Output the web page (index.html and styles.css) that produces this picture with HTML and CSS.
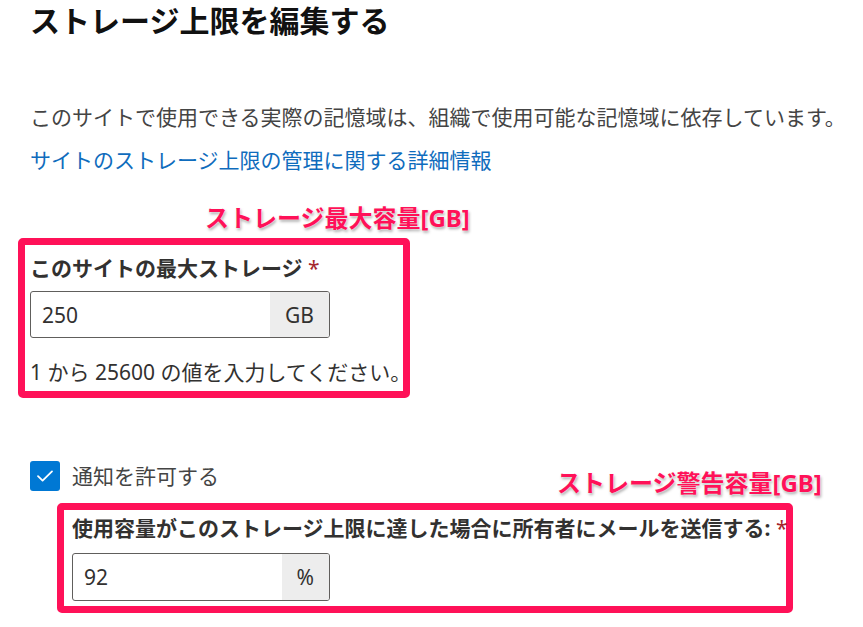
FILE: index.html
```html
<!DOCTYPE html>
<html lang="ja">
<head>
<meta charset="utf-8">
<title>ストレージ上限を編集する</title>
<link rel="stylesheet" href="styles.css">
</head>
<body>
<main class="panel">
  <h1 class="title">ストレージ上限を編集する</h1>
  <p class="desc">このサイトで使用できる実際の記憶域は、組織で使用可能な記憶域に依存しています。</p>
  <a class="link" href="#">サイトのストレージ上限の管理に関する詳細情報</a>

  <section class="mark mark-max">
    <span class="note note-max">ストレージ最大容量[GB]</span>
    <label class="field-label">このサイトの最大ストレージ <span class="req">*</span></label>
    <div class="input input-max">
      <span class="value">250</span>
      <span class="suffix">GB</span>
    </div>
    <p class="help">1 から 25600 の値を入力してください。</p>
  </section>

  <div class="check-row">
    <span class="checkbox">
      <svg width="18" height="14" viewBox="0 0 18 14"><path d="M2 7.2 L6.6 11.6 L16 2.4" fill="none" stroke="#fff" stroke-width="1.8" stroke-linecap="round" stroke-linejoin="round"/></svg>
    </span>
    <span class="check-label">通知を許可する</span>
  </div>

  <section class="mark mark-warn">
    <span class="note note-warn">ストレージ警告容量[GB]</span>
    <label class="field-label">使用容量がこのストレージ上限に達した場合に所有者にメールを送信する: <span class="req">*</span></label>
    <div class="input input-warn">
      <span class="value">92</span>
      <span class="suffix">%</span>
    </div>
  </section>
</main>
</body>
</html>
```

FILE: styles.css
```css
* { box-sizing: border-box; }
html, body { margin: 0; padding: 0; background: #fff; }
body {
  font-family: "Noto Sans", "Noto Sans CJK JP", sans-serif;
  color: #323130;
  font-size: 21px;
}
.panel {
  padding: 1px 0 0 30px;
  display: flex;
  flex-direction: column;
  align-items: flex-start;
}
.title {
  margin: 0;
  font-size: 30px;
  line-height: 39px;
  font-weight: 700;
  color: #111;
}
.desc {
  margin: 62px 0 0;
  line-height: 30px;
  color: #444;
  white-space: nowrap;
}
.link {
  margin-top: 13px;
  line-height: 30px;
  color: #0f6cbd;
  text-decoration: none;
}
.mark {
  position: relative;
  border: 7px solid #ff1158;
  border-radius: 5px;
  display: flex;
  flex-direction: column;
  align-items: flex-start;
}
.mark-max {
  margin: 63px 0 0 -12px;
  width: 392px;
  padding: 8px 0 4px 5px;
}
.mark-warn {
  margin: 12px 0 0 27px;
  width: 736px;
  padding: 3px 0 5px 8px;
}
.note {
  position: absolute;
  font-size: 24px;
  font-weight: 700;
  line-height: 30px;
  color: #ff1158;
  white-space: nowrap;
  text-shadow: 0 0 2px #fff, 1px 2px 3px rgba(0, 0, 0, 0.35);
}
.note-max { left: 180px; top: -42px; }
.note-warn { left: 493px; top: -42px; }
.field-label {
  font-weight: 700;
  line-height: 30px;
  color: #323130;
  white-space: nowrap;
}
.req { color: #a4262c; font-weight: 400; }
.input {
  display: flex;
  border: 1px solid #605e5c;
  border-radius: 3px;
  overflow: hidden;
  background: #fff;
}
.input-max { margin-top: 8px; width: 300px; height: 47px; }
.input-warn { margin-top: 10px; width: 258px; height: 48px; }
.value {
  flex: 1;
  display: flex;
  align-items: center;
  padding-left: 11px;
  color: #323130;
}
.suffix {
  display: flex;
  align-items: center;
  padding: 0 15px;
  background: #ededed;
  color: #323130;
}
.help {
  margin: 19px 0 0;
  line-height: 30px;
  color: #323130;
  white-space: nowrap;
}
.check-row {
  margin-top: 63px;
  display: flex;
  align-items: center;
  gap: 12px;
}
.checkbox {
  width: 30px;
  height: 30px;
  border-radius: 3px;
  background: #0078d4;
  display: flex;
  align-items: center;
  justify-content: center;
}
.check-label {
  line-height: 30px;
  color: #444;
}
```
